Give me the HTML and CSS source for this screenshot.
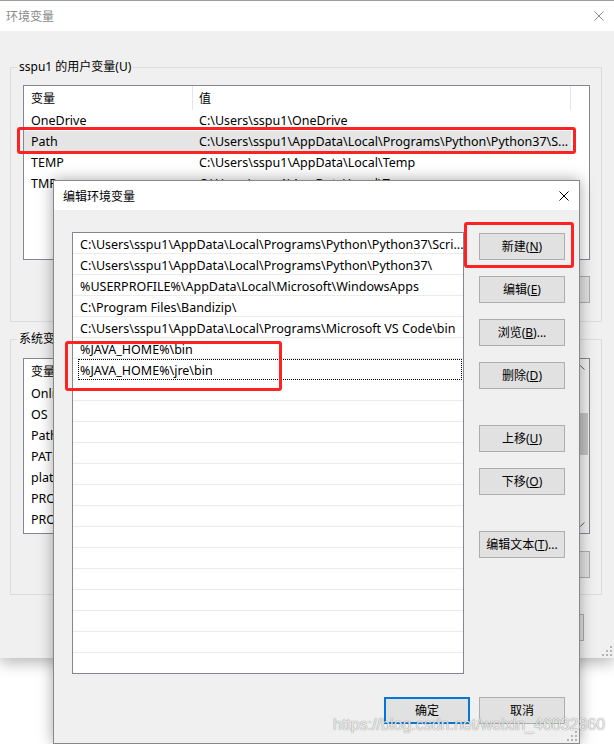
FILE: index.html
```html
<!DOCTYPE html>
<html lang="zh-CN">
<head>
<meta charset="utf-8">
<title>编辑环境变量</title>
<link rel="stylesheet" href="styles.css">
</head>
<body>
<div class="desktop">
  <!-- Background window: 环境变量 -->
  <div class="win win-back">
    <div class="titlebar">
      <span class="title">环境变量</span>
      <svg class="close" width="10" height="10" viewBox="0 0 10 10"><path d="M0.5 0.5L9.5 9.5M9.5 0.5L0.5 9.5" stroke="#8c8c8c" stroke-width="1" fill="none"/></svg>
    </div>
    <fieldset class="group g1">
      <legend>sspu1 的用户变量(U)</legend>
      <div class="lv lv1">
        <div class="lv-head"><span class="c1">变量</span><span class="c2">值</span></div>
        <div class="lv-row"><span class="c1">OneDrive</span><span class="c2">C:\Users\sspu1\OneDrive</span></div>
        <div class="lv-row sel"><span class="c1">Path</span><span class="c2">C:\Users\sspu1\AppData\Local\Programs\Python\Python37\S...</span></div>
        <div class="lv-row"><span class="c1">TEMP</span><span class="c2">C:\Users\sspu1\AppData\Local\Temp</span></div>
        <div class="lv-row"><span class="c1">TMP</span><span class="c2">C:\Users\sspu1\AppData\Local\Temp</span></div>
      </div>
      <div class="btnrow">
        <button class="btn bk" aria-label="新建(N)..."></button>
        <button class="btn bk" aria-label="编辑(E)..."></button>
        <button class="btn bk" aria-label="删除(D)"></button>
      </div>
    </fieldset>
    <fieldset class="group g2">
      <legend>系统变量(S)</legend>
      <div class="lv lv2">
        <div class="lv-body">
          <div class="lv-head"><span class="c1">变量</span><span class="c2">值</span></div>
          <div class="lv-row"><span class="c1">OnlineServices</span><span class="c2"></span></div>
          <div class="lv-row"><span class="c1">OS</span><span class="c2"></span></div>
          <div class="lv-row"><span class="c1">Path</span><span class="c2"></span></div>
          <div class="lv-row"><span class="c1">PATHEXT</span><span class="c2"></span></div>
          <div class="lv-row"><span class="c1">platformcode</span><span class="c2"></span></div>
          <div class="lv-row"><span class="c1">PROCESSOR_ARCH</span><span class="c2"></span></div>
          <div class="lv-row"><span class="c1">PROCESSOR_ID</span><span class="c2"></span></div>
        </div>
        <div class="vscroll">
          <div class="sb-arrow"><svg width="9" height="5" viewBox="0 0 9 5"><path d="M0.5 4.5L4.5 0.8L8.5 4.5" stroke="#606060" fill="none"/></svg></div>
          <div class="sb-track"><div class="sb-thumb"></div></div>
          <div class="sb-arrow"><svg width="9" height="5" viewBox="0 0 9 5"><path d="M0.5 0.5L4.5 4.2L8.5 0.5" stroke="#606060" fill="none"/></svg></div>
        </div>
      </div>
      <div class="btnrow btnrow2">
        <button class="btn bk" aria-label="新建(W)..."></button>
        <button class="btn bk" aria-label="编辑(I)..."></button>
        <button class="btn bk" aria-label="删除(L)"></button>
      </div>
    </fieldset>
    <div class="btnrow footer-back">
      <button class="btn bk" aria-label="确定"></button>
      <button class="btn bk" aria-label="取消"></button>
    </div>
    <svg class="grip" width="10" height="10" viewBox="0 0 10 10"><g fill="#b4b4b4"><rect x="8" y="0" width="2" height="2"/><rect x="4" y="4" width="2" height="2"/><rect x="8" y="4" width="2" height="2"/><rect x="0" y="8" width="2" height="2"/><rect x="4" y="8" width="2" height="2"/><rect x="8" y="8" width="2" height="2"/></g></svg>
  </div>

  <!-- Foreground dialog: 编辑环境变量 -->
  <div class="win dialog">
    <div class="titlebar">
      <span class="title">编辑环境变量</span>
      <svg class="close" width="10" height="10" viewBox="0 0 10 10"><path d="M0.5 0.5L9.5 9.5M9.5 0.5L0.5 9.5" stroke="#000" stroke-width="1" fill="none"/></svg>
    </div>
    <div class="dlg-main">
      <div class="listbox">
        <div class="lb-row">C:\Users\sspu1\AppData\Local\Programs\Python\Python37\Scri...</div>
        <div class="lb-row">C:\Users\sspu1\AppData\Local\Programs\Python\Python37\</div>
        <div class="lb-row">%USERPROFILE%\AppData\Local\Microsoft\WindowsApps</div>
        <div class="lb-row">C:\Program Files\Bandizip\</div>
        <div class="lb-row">C:\Users\sspu1\AppData\Local\Programs\Microsoft VS Code\bin</div>
        <div class="lb-row">%JAVA_HOME%\bin</div>
        <div class="lb-row focus">%JAVA_HOME%\jre\bin</div>
        <div class="lb-row"></div>
        <div class="lb-row"></div>
        <div class="lb-row"></div>
        <div class="lb-row"></div>
        <div class="lb-row"></div>
        <div class="lb-row"></div>
        <div class="lb-row"></div>
        <div class="lb-row"></div>
        <div class="lb-row"></div>
        <div class="lb-row"></div>
        <div class="lb-row"></div>
        <div class="lb-row"></div>
        <div class="lb-row"></div>
        <div class="lb-row"></div>
      </div>
      <div class="btncol">
        <button class="btn">新建(<u>N</u>)</button>
        <button class="btn">编辑(<u>E</u>)</button>
        <button class="btn">浏览(<u>B</u>)...</button>
        <button class="btn">删除(<u>D</u>)</button>
        <button class="btn sep">上移(<u>U</u>)</button>
        <button class="btn">下移(<u>O</u>)</button>
        <button class="btn sep">编辑文本(<u>T</u>)...</button>
      </div>
    </div>
    <div class="dlg-foot">
      <button class="btn default">确定</button>
      <button class="btn">取消</button>
    </div>
    <svg class="grip" width="10" height="10" viewBox="0 0 10 10"><g fill="#b4b4b4"><rect x="8" y="0" width="2" height="2"/><rect x="4" y="4" width="2" height="2"/><rect x="8" y="4" width="2" height="2"/><rect x="0" y="8" width="2" height="2"/><rect x="4" y="8" width="2" height="2"/><rect x="8" y="8" width="2" height="2"/></g></svg>
  </div>

  <!-- annotation marks -->
  <div class="mark mark-path"></div>
  <div class="mark mark-java"></div>
  <div class="mark mark-new"></div>

  <div class="watermark">https://blog.csdn.net/weixin_46032860</div>
</div>
</body>
</html>
```

FILE: styles.css
```css
* { box-sizing: border-box; }
html, body { margin: 0; padding: 0; }
body {
  width: 614px;
  height: 744px;
  overflow: hidden;
  background: #fff;
  font-family: "Noto Sans", "Noto Sans CJK SC", sans-serif;
  font-size: 12px;
  color: #000;
}
.desktop { position: relative; width: 614px; height: 744px; overflow: hidden; }

.win { position: absolute; background: #f0f0f0; }
.titlebar {
  display: flex;
  align-items: center;
  justify-content: space-between;
  background: #fff;
  flex: none;
}
.close { display: block; }
.grip { position: absolute; right: 2px; bottom: 2px; }

/* background window */
.win-back {
  left: 0; top: 0;
  width: 614px; height: 658px;
  display: flex; flex-direction: column;
  box-shadow: 0 5px 14px rgba(0,0,0,0.28);
}
.win-back .titlebar {
  height: 31px;
  border-top: 1px solid #9c9c9c;
  padding: 0 10px 0 6px;
  color: #8a8a8a;
}

.group {
  border: 1px solid #dcdcdc;
  margin: 28px 12px 0 10px;
  padding: 0 11px 18px 12px;
  min-width: 0;
}
.group legend {
  padding: 0 2px;
  margin-left: -6px;
  line-height: 16px;
}
.g2 { margin-top: 9px; padding-bottom: 16px; }

.lv {
  border: 1px solid #828790;
  background: #fff;
  margin-top: 10px;
  height: 175px;
  overflow: hidden;
}
.lv2 { margin-top: 11px; height: 176px; display: flex; }
.lv-body { flex: 1; min-width: 0; overflow: hidden; }

.lv-head { display: flex; height: 24px; width: 547px; }
.lv-head span { display: flex; align-items: center; border-right: 1px solid #e5e5e5; }
.lv-row { display: flex; height: 21px; line-height: 21px; width: 547px; white-space: nowrap; font-size: 12.5px; }
.c1 { width: 169px; padding-left: 7px; overflow: hidden; }
.c2 { width: 378px; padding-left: 6px; overflow: hidden; }
.lv-row.sel { background: #e5e5e5; }

.vscroll { width: 17px; flex: none; background: #f0f0f0; display: flex; flex-direction: column; }
.sb-arrow { height: 17px; display: flex; align-items: center; justify-content: center; }
.sb-track { flex: 1; padding: 37px 1px 0 1px; }
.sb-thumb { height: 42px; background: #c2c2c2; }

.btnrow { display: flex; justify-content: flex-end; gap: 10px; margin-top: 16px; }
.btnrow2 { margin-top: 17px; }
.footer-back { margin-top: 19px; margin-right: 30px; }

.btn {
  width: 86px;
  height: 27px;
  border: 1px solid #adadad;
  background: #e1e1e1;
  font: inherit;
  color: #000;
  padding: 0;
  text-align: center;
  line-height: 25px;
}
.btn.bk { width: 75px; }

/* dialog */
.dialog {
  left: 53px; top: 180px;
  width: 527px; height: 564px;
  border: 1px solid #888;
  display: flex; flex-direction: column;
  box-shadow: 0 0 14px rgba(0,0,0,0.35);
}
.dialog .titlebar { height: 29px; padding: 0 10px 0 9px; }

.dlg-main { display: flex; padding: 22px 14px 0 18px; }
.listbox {
  width: 392px;
  height: 442px;
  border: 1px solid #828790;
  background: #fff;
  overflow: hidden;
  flex: none;
}
.lb-row {
  height: 21px;
  line-height: 18px;
  padding-top: 3px;
  border-bottom: 1px solid #ebebeb;
  padding-left: 7px;
  white-space: nowrap;
  overflow: hidden;
  font-size: 12.5px;
}
.lb-row.focus {
  margin: 0 1px 0 5px;
  border: 1px dotted #000;
  padding-left: 1px;
  padding-top: 2px;
  line-height: 17px;
}
.btncol { display: flex; flex-direction: column; gap: 16px; margin-left: 15px; padding-top: 1px; }
.btn.sep { margin-top: 20px; }

.dlg-foot { display: flex; justify-content: flex-end; gap: 9px; padding: 23px 14px 0 0; }
.btn.default { border: 2px solid #0078d7; line-height: 23px; }

/* annotations */
.mark { position: absolute; border: 3px solid #ff2222; border-radius: 3px; }
.mark-path { left: 17px; top: 127px; width: 559px; height: 27px; }
.mark-java { left: 65px; top: 341px; width: 217px; height: 50px; }
.mark-new { left: 464px; top: 222px; width: 110px; height: 46px; }

.watermark {
  position: absolute;
  left: 333px; top: 716px;
  font-family: "Liberation Sans", sans-serif;
  font-size: 16px;
  color: rgba(255,255,255,0.85);
  text-shadow: 0 0 1px rgba(0,0,0,0.4), 0 0 1px rgba(0,0,0,0.25);
  white-space: nowrap;
}
```
